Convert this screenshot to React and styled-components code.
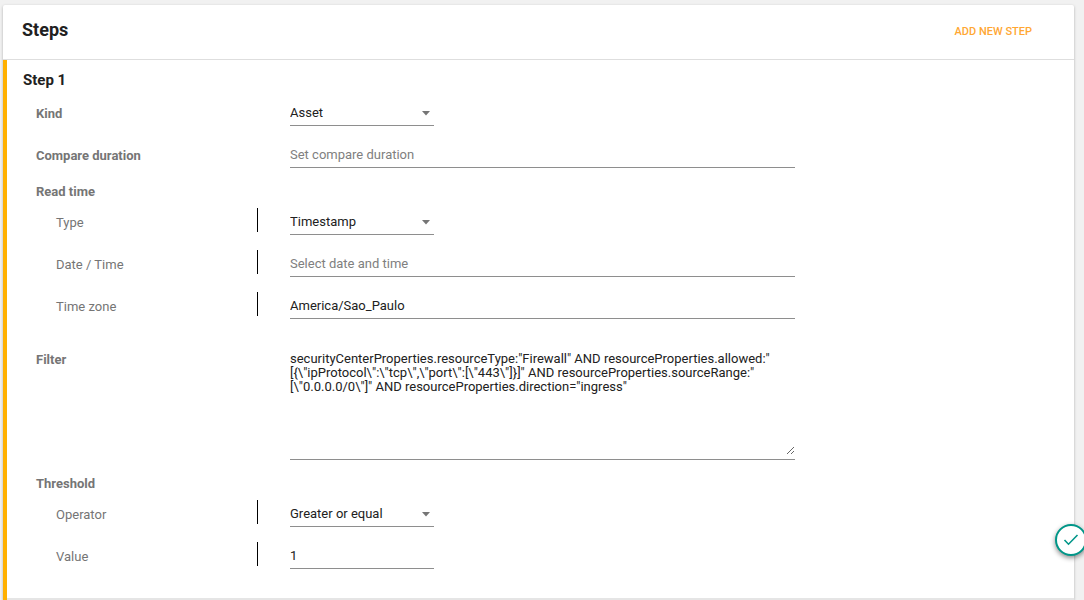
import React, { useState } from "react";
import styled, { createGlobalStyle } from "styled-components";

const GlobalStyle = createGlobalStyle`
  *, *::before, *::after { box-sizing: border-box; }
  body {
    margin: 0;
    background: #f1f1f1;
    color: #212121;
    font-family: Roboto, "Liberation Sans", sans-serif;
    font-size: 13px;
  }
`;

const Page = styled.main`
  padding: 5px 10px 0 3px;
`;

const Card = styled.section`
  background: #fff;
  border-radius: 2px 2px 0 0;
  box-shadow: 0 1px 3px rgba(0, 0, 0, 0.28);
`;

const CardHeader = styled.header`
  display: flex;
  align-items: center;
  justify-content: space-between;
  height: 55px;
  padding: 0 34px 0 19px;
  border-bottom: 1px solid #dedede;
`;

const CardTitle = styled.h2`
  margin: 0;
  padding-bottom: 5px;
  font-size: 18px;
  line-height: 24px;
  font-weight: 700;
`;

const AddButton = styled.button`
  padding: 4px 8px;
  border: 0;
  background: none;
  color: #ffa733;
  font: 500 11px/16px Roboto, "Liberation Sans", sans-serif;
  text-transform: uppercase;
  cursor: pointer;
`;

const Step = styled.form`
  border-left: 4px solid #ffb000;
`;

const StepBody = styled.div`
  padding: 8px 16px 29px;
`;

const StepTitle = styled.h3`
  margin: 0 0 7px;
  font-size: 15px;
  line-height: 24px;
  font-weight: 700;
`;

const Divider = styled.hr`
  height: 2px;
  margin: 0;
  border: 0;
  background: #e5e5e5;
`;

const Group = styled.fieldset`
  min-width: 0;
  margin: 0;
  padding: 0;
  border: 0;
`;

const GroupTitle = styled.legend`
  padding: 12px 0 4px 13px;
  color: #757575;
  font-weight: 700;
  line-height: 24px;
`;

const Rows = styled.div`
  display: flex;
  flex-direction: column;
  gap: 15px;
`;

const Row = styled.div`
  display: grid;
  grid-template-columns: 234px 33px minmax(0, 505px);
  align-items: ${(p) => (p.$tall ? "start" : "end")};
  margin-top: ${(p) => (p.$tall ? "33px" : "0")};
`;

const Label = styled.label`
  padding-left: ${(p) => (p.$nested ? "33px" : "13px")};
  color: #757575;
  font-weight: ${(p) => (p.$nested ? 400 : 700)};
  line-height: ${(p) => (p.$tall ? "16px" : "24px")};
`;

const Bar = styled.span`
  grid-column: 2;
  width: 1px;
  height: 24px;
  margin-bottom: 3px;
  background: #000;
  visibility: ${(p) => (p.$visible ? "visible" : "hidden")};
`;

const control = `
  display: block;
  width: 100%;
  margin: 0;
  border: 0;
  border-bottom: 1px solid #8e8e8e;
  border-radius: 0;
  outline: 0;
  background: transparent;
  color: #212121;
  font-family: Roboto, "Liberation Sans", sans-serif;
  font-size: 13px;
`;

const Input = styled.input`
  ${control}
  width: ${(p) => (p.$short ? "144px" : "100%")};
  height: 27px;
  padding: 0;
  &::placeholder { color: #808080; opacity: 1; }
`;

const SelectWrap = styled.div`
  position: relative;
  width: 144px;
`;

const Select = styled.select`
  ${control}
  height: 27px;
  padding: 0 20px 0 0;
  appearance: none;
`;

const Arrow = styled.svg`
  position: absolute;
  top: 12px;
  right: 3px;
  pointer-events: none;
`;

const AreaWrap = styled.div`
  padding-bottom: 4px;
  border-bottom: 1px solid #8e8e8e;
`;

const TextArea = styled.textarea`
  ${control}
  height: 103px;
  padding: 0;
  border: 0;
  line-height: 14px;
  resize: both;
`;

const Fab = styled.button`
  position: fixed;
  right: -3px;
  bottom: 44px;
  display: flex;
  align-items: center;
  justify-content: center;
  width: 32px;
  height: 32px;
  padding: 0;
  border: 2px solid #009688;
  border-radius: 50%;
  background: #fff;
  box-shadow: 0 2px 5px rgba(0, 0, 0, 0.45);
  cursor: pointer;
`;

function Field({ id, label, nested, children }) {
  return (
    <Row>
      <Label htmlFor={id} $nested={nested}>{label}</Label>
      <Bar $visible={nested} />
      {children}
    </Row>
  );
}

function Dropdown({ id, options }) {
  return (
    <SelectWrap>
      <Select id={id} defaultValue={options[0]}>
        {options.map((o) => <option key={o}>{o}</option>)}
      </Select>
      <Arrow width="10" height="5" viewBox="0 0 10 5" aria-hidden="true">
        <path d="M1 0h8L5 4.5z" fill="#757575" />
      </Arrow>
    </SelectWrap>
  );
}

const FILTER = `securityCenterProperties.resourceType:"Firewall" AND resourceProperties.allowed:"[{\\"ipProtocol\\":\\"tcp\\",\\"port\\":[\\"443\\"]}]" AND resourceProperties.sourceRange:"[\\"0.0.0.0/0\\"]" AND resourceProperties.direction="ingress"`;

export default function App() {
  const [filter, setFilter] = useState(FILTER);
  return (
    <Page>
      <GlobalStyle />
      <Card>
        <CardHeader>
          <CardTitle>Steps</CardTitle>
          <AddButton type="button">Add new step</AddButton>
        </CardHeader>
        <Step>
          <StepBody>
            <StepTitle>Step 1</StepTitle>
            <Rows>
              <Field id="kind" label="Kind">
                <Dropdown id="kind" options={["Asset", "Finding"]} />
              </Field>
              <Field id="duration" label="Compare duration">
                <Input id="duration" placeholder="Set compare duration" />
              </Field>
            </Rows>
            <Group>
              <GroupTitle>Read time</GroupTitle>
              <Rows>
                <Field id="type" label="Type" nested>
                  <Dropdown id="type" options={["Timestamp", "Duration"]} />
                </Field>
                <Field id="date" label="Date / Time" nested>
                  <Input id="date" placeholder="Select date and time" />
                </Field>
                <Field id="zone" label="Time zone" nested>
                  <Input id="zone" defaultValue="America/Sao_Paulo" />
                </Field>
              </Rows>
            </Group>
            <Row $tall>
              <Label htmlFor="filter" $tall>Filter</Label>
              <Bar />
              <AreaWrap>
                <TextArea
                  id="filter"
                  spellCheck={false}
                  value={filter}
                  onChange={(e) => setFilter(e.target.value)}
                />
              </AreaWrap>
            </Row>
            <Group>
              <GroupTitle>Threshold</GroupTitle>
              <Rows>
                <Field id="operator" label="Operator" nested>
                  <Dropdown id="operator" options={["Greater or equal", "Less or equal"]} />
                </Field>
                <Field id="value" label="Value" nested>
                  <Input id="value" $short defaultValue="1" />
                </Field>
              </Rows>
            </Group>
          </StepBody>
          <Divider />
        </Step>
      </Card>
      <Fab type="button" aria-label="Confirm">
        <svg width="16" height="14" viewBox="0 0 16 14" fill="none" aria-hidden="true">
          <path d="M1.5 7l4 4.2L14.5 2" stroke="#009688" strokeWidth="1.6" />
        </svg>
      </Fab>
    </Page>
  );
}
